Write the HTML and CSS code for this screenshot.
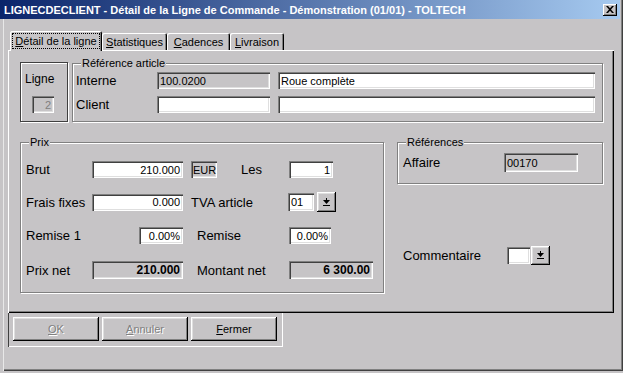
FILE: index.html
```html
<!DOCTYPE html>
<html lang="fr">
<head>
    <meta charset="UTF-8">
    <title>LIGNECDECLIENT</title>
    <link rel="stylesheet" href="styles.css">
</head>
<body>
    <div class="window">
        <div class="titlebar">
            <span class="title">LIGNECDECLIENT - Détail de la Ligne de Commande - Démonstration (01/01) - TOLTECH</span>
            <span class="close">
                <svg width="8" height="7" viewBox="0 0 8 7"><path d="M0 0h2l2 2.2L6 0h2L5 3.5 8 7H6L4 4.8 2 7H0l3-3.5z" fill="#000"/></svg>
            </span>
        </div>

        <div class="tabs">
            <div class="tab tab-active"><span class="focus"><u>D</u>étail de la ligne</span></div>
            <div class="tab tab-stat"><u>S</u>tatistiques</div>
            <div class="tab tab-cad"><u>C</u>adences</div>
            <div class="tab tab-liv"><u>L</u>ivraison</div>
        </div>

        <div class="panel">
            <div class="row-top">
                <div class="ligne-box">
                    <div class="ligne-label">Ligne</div>
                    <div class="field ro ligne-field">2</div>
                </div>
                <div class="group ref-group">
                    <span class="legend">Référence article</span>
                    <div class="frow">
                        <span class="lbl w-ref">Interne</span>
                        <div class="field ro f-code">100.0200</div>
                        <div class="field f-desc">Roue complète</div>
                    </div>
                    <div class="frow mt-7">
                        <span class="lbl w-ref">Client</span>
                        <div class="field f-code"></div>
                        <div class="field f-desc"></div>
                    </div>
                </div>
            </div>

            <div class="row-main">
                <div class="group prix-group">
                    <span class="legend">Prix</span>
                    <div class="frow">
                        <span class="lbl w-66">Brut</span>
                        <div class="field num w-91">210.000</div>
                        <div class="field ro f-eur">EUR</div>
                        <span class="lbl lbl-les">Les</span>
                        <div class="field num w-44">1</div>
                    </div>
                    <div class="frow mt-14">
                        <span class="lbl w-66">Frais fixes</span>
                        <div class="field num w-91">0.000</div>
                        <span class="lbl lbl-tva">TVA article</span>
                        <div class="field f-tva">01</div>
                        <div class="btn drop"><svg width="7" height="9" viewBox="0 0 7 9"><path d="M3 0h1v2H3zM0 2h7L3.5 6zM0 7h7v1H0z" fill="#000"/></svg></div>
                    </div>
                    <div class="frow mt-15">
                        <span class="lbl w-113">Remise 1</span>
                        <div class="field num w-44">0.00%</div>
                        <span class="lbl lbl-right">Remise</span>
                        <div class="field num w-42">0.00%</div>
                    </div>
                    <div class="frow mt-17">
                        <span class="lbl w-66">Prix net</span>
                        <div class="field ro num bold w-91 h-18">210.000</div>
                        <span class="lbl lbl-right">Montant net</span>
                        <div class="field ro num bold w-84 h-18">6 300.00</div>
                    </div>
                </div>

                <div class="side">
                    <div class="group refs-group">
                        <span class="legend">Références</span>
                        <div class="frow">
                            <span class="lbl w-101">Affaire</span>
                            <div class="field ro f-affaire">00170</div>
                        </div>
                    </div>
                    <div class="frow comment-row">
                        <span class="lbl w-104">Commentaire</span>
                        <div class="field f-comment"></div>
                        <div class="btn drop drop-comment"><svg width="7" height="9" viewBox="0 0 7 9"><path d="M3 0h1v2H3zM0 2h7L3.5 6zM0 7h7v1H0z" fill="#000"/></svg></div>
                    </div>
                </div>
            </div>
        </div>

        <div class="buttons">
            <div class="btn push disabled"><span><u>O</u>K</span></div>
            <div class="btn push disabled"><span><u>A</u>nnuler</span></div>
            <div class="btn push"><span><u>F</u>ermer</span></div>
        </div>
    </div>
</body>
</html>
```

FILE: styles.css
```css
body {
    margin: 0;
    background: #c6c4c6;
    font-family: "Liberation Sans", Arial, sans-serif;
    font-size: 11px;
    color: #000;
}
.window {
    width: 623px;
    height: 371px;
    box-sizing: border-box;
    overflow: hidden;
    box-shadow: inset 3px 0 0 #c6c4c6, inset 4px 0 0 #e8e8e8, inset -1px -1px 0 #404040, inset -2px -2px 0 #808080;
}

/* title bar */
.titlebar {
    width: 620px;
    height: 19px;
    box-sizing: border-box;
    padding: 0 3px 0 4px;
    display: flex;
    align-items: center;
    justify-content: space-between;
    background: linear-gradient(to right, #0a246a, #a6caf0);
}
.title {
    color: #fff;
    font-weight: bold;
    font-size: 11px;
    white-space: nowrap;
}
.close {
    width: 14px;
    height: 12px;
    display: flex;
    align-items: center;
    justify-content: center;
    background: #c6c4c6;
    box-shadow: inset -1px -1px 0 #000, inset 1px 1px 0 #fff, inset -2px -2px 0 #808080;
}

/* tabs */
.tabs {
    margin-top: 12px;
    height: 19px;
    padding-left: 10px;
    display: flex;
    align-items: flex-end;
}
.tab {
    height: 17px;
    display: flex;
    align-items: center;
    justify-content: center;
    box-shadow: inset 1px 1px 0 #fff, inset -1px 0 0 #000, inset -2px 0 0 #808080;
    border-radius: 2px 2px 0 0;
}
.tab-active {
    position: relative;
    width: 92px;
    height: 20px;
    margin-bottom: -1px;
    background: #c6c4c6;
}
.focus {
    display: inline-block;
    line-height: 12px;
    padding: 1px 2px;
    outline: 1px dotted #000;
}
.tab-stat { width: 65px; }
.tab-cad { width: 63px; }
.tab-liv { width: 54px; }

/* main panel */
.panel {
    margin-left: 8px;
    width: 606px;
    height: 263px;
    box-sizing: border-box;
    padding: 12px 0 0 12px;
    box-shadow: inset 1px 1px 0 #fff, inset -1px -1px 0 #000, inset -2px -2px 0 #808080;
}
.row-top {
    display: flex;
    align-items: flex-start;
}
.row-main {
    display: flex;
    align-items: flex-start;
    margin-top: 20px;
}

.ligne-box {
    width: 48px;
    height: 60px;
    box-sizing: border-box;
    border: 1px solid #404040;
    box-shadow: inset 1px 1px 0 #fff, 1px 1px 0 #fff;
    padding: 9px 0 0 4px;
}
.ligne-label {
    font-size: 12px;
    line-height: 14px;
}
.ligne-field {
    margin: 10px 0 0 7px;
    width: 22px;
    color: #808080;
    justify-content: flex-end;
}

.group {
    position: relative;
    box-sizing: border-box;
    border: 1px solid #808080;
    box-shadow: inset 1px 1px 0 #fff, 1px 1px 0 #fff;
}
.legend {
    position: absolute;
    top: -7px;
    left: 8px;
    padding: 0 1px;
    line-height: 13px;
    background: #c6c4c6;
}
.ref-group {
    margin: 1px 0 0 4px;
    width: 531px;
    height: 59px;
    padding: 8px 0 0 3px;
}
.prix-group {
    width: 364px;
    height: 151px;
    padding: 18px 0 0 5px;
}
.side {
    margin-left: 13px;
}
.refs-group {
    width: 206px;
    height: 42px;
    padding: 10px 0 0 5px;
}
.comment-row {
    margin-top: 62px;
    padding-left: 6px;
}

/* form rows */
.frow {
    display: flex;
    align-items: center;
}
.mt-7 { margin-top: 7px; }
.mt-14 { margin-top: 14px; }
.mt-15 { margin-top: 15px; }
.mt-17 { margin-top: 17px; }

.lbl {
    font-size: 13px;
    line-height: 15px;
    white-space: nowrap;
    flex: none;
}
.w-ref { width: 81px; }
.w-66 { width: 66px; }
.w-113 { width: 113px; }
.w-101 { width: 101px; }
.w-104 { width: 104px; }
.lbl-les { margin-left: 24px; width: 48px; }
.lbl-tva { margin-left: 8px; width: 97px; }
.lbl-right { margin-left: 14px; width: 92px; }

/* fields */
.field {
    flex: none;
    height: 17px;
    box-sizing: border-box;
    padding: 0 3px 0 3px;
    display: flex;
    align-items: center;
    background: #fff;
    font-size: 11px;
    white-space: nowrap;
    box-shadow: inset 1px 1px 0 #808080, inset 2px 2px 0 #404040, inset -1px -1px 0 #fff, inset -2px -2px 0 #dfdfdf;
}
.field.ro {
    background: #c6c4c6;
}
.num {
    justify-content: flex-end;
}
.bold {
    font-weight: bold;
    font-size: 12px;
}
.h-18 { height: 18px; }
.f-code { width: 113px; }
.f-desc { width: 317px; margin-left: 8px; }
.w-91 { width: 91px; }
.w-44 { width: 44px; }
.w-42 { width: 42px; }
.w-84 { width: 84px; }
.f-eur { width: 26px; margin-left: 8px; padding-left: 2px; }
.f-tva { width: 26px; height: 18px; }
.f-affaire { width: 74px; height: 19px; }
.f-comment { width: 23px; }

/* buttons */
.btn {
    flex: none;
    box-sizing: border-box;
    display: flex;
    align-items: center;
    justify-content: center;
    background: #c6c4c6;
    box-shadow: inset -1px -1px 0 #000, inset 1px 1px 0 #fff, inset -2px -2px 0 #808080, inset 2px 2px 0 #dfdfdf;
}
.drop {
    width: 19px;
    height: 20px;
    margin-left: 3px;
}
.drop-comment {
    height: 19px;
    margin-left: 1px;
}
.buttons {
    margin-left: 8px;
    width: 275px;
    height: 34px;
    box-sizing: border-box;
    padding: 4px 0 0 5px;
    display: flex;
    gap: 3px;
    box-shadow: inset 1px 0 0 #404040, inset -1px -1px 0 #fff;
}
.push {
    width: 86px;
    height: 24px;
    font-size: 11px;
}
.push.disabled {
    color: #808080;
    text-shadow: 1px 1px 0 #fff;
}
```
